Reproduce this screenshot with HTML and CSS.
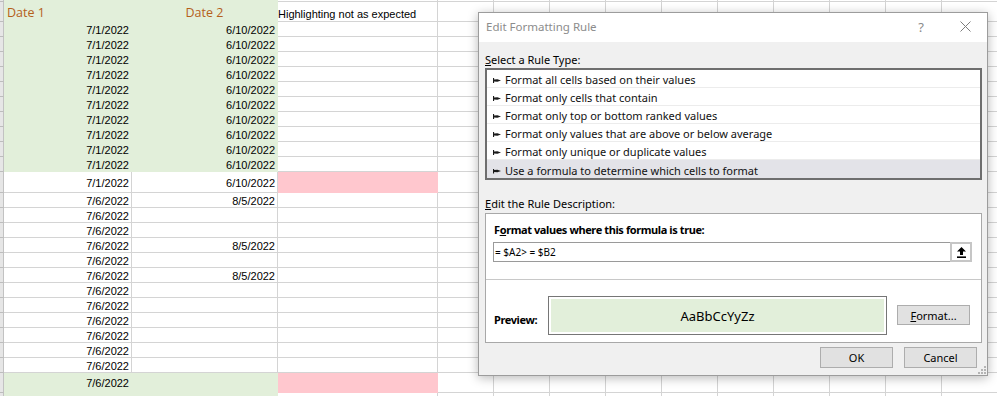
FILE: index.html
```html
<!DOCTYPE html>
<html lang="en">
<head>
    <meta charset="UTF-8">
    <title>Edit Formatting Rule</title>
    <link rel="stylesheet" href="styles.css">
</head>
<body>
    <div class="sheet">
        <div class="row top"><div class="rh"></div><div class="g"></div><div class="g"></div><div></div><div class="rest"></div></div>
        <div class="row head"><div class="rh"></div><div class="g hd left">Date 1</div><div class="g hd mid">Date 2</div><div class="note">Highlighting not as expected</div><div class="rest"></div></div>
        <div class="row"><div class="rh"></div><div class="g">7/1/2022</div><div class="g">6/10/2022</div><div></div><div class="rest"></div></div>
        <div class="row"><div class="rh"></div><div class="g">7/1/2022</div><div class="g">6/10/2022</div><div></div><div class="rest"></div></div>
        <div class="row"><div class="rh"></div><div class="g">7/1/2022</div><div class="g">6/10/2022</div><div></div><div class="rest"></div></div>
        <div class="row"><div class="rh"></div><div class="g">7/1/2022</div><div class="g">6/10/2022</div><div></div><div class="rest"></div></div>
        <div class="row"><div class="rh"></div><div class="g">7/1/2022</div><div class="g">6/10/2022</div><div></div><div class="rest"></div></div>
        <div class="row"><div class="rh"></div><div class="g">7/1/2022</div><div class="g">6/10/2022</div><div></div><div class="rest"></div></div>
        <div class="row"><div class="rh"></div><div class="g">7/1/2022</div><div class="g">6/10/2022</div><div></div><div class="rest"></div></div>
        <div class="row"><div class="rh"></div><div class="g">7/1/2022</div><div class="g">6/10/2022</div><div></div><div class="rest"></div></div>
        <div class="row"><div class="rh"></div><div class="g">7/1/2022</div><div class="g">6/10/2022</div><div></div><div class="rest"></div></div>
        <div class="row"><div class="rh"></div><div class="g">7/1/2022</div><div class="g">6/10/2022</div><div></div><div class="rest"></div></div>
        <div class="row tall"><div class="rh"></div><div>7/1/2022</div><div>6/10/2022</div><div class="p"></div><div class="rest"></div></div>
        <div class="row"><div class="rh"></div><div>7/6/2022</div><div>8/5/2022</div><div></div><div class="rest"></div></div>
        <div class="row"><div class="rh"></div><div>7/6/2022</div><div></div><div></div><div class="rest"></div></div>
        <div class="row"><div class="rh"></div><div>7/6/2022</div><div></div><div></div><div class="rest"></div></div>
        <div class="row"><div class="rh"></div><div>7/6/2022</div><div>8/5/2022</div><div></div><div class="rest"></div></div>
        <div class="row"><div class="rh"></div><div>7/6/2022</div><div></div><div></div><div class="rest"></div></div>
        <div class="row"><div class="rh"></div><div>7/6/2022</div><div>8/5/2022</div><div></div><div class="rest"></div></div>
        <div class="row"><div class="rh"></div><div>7/6/2022</div><div></div><div></div><div class="rest"></div></div>
        <div class="row"><div class="rh"></div><div>7/6/2022</div><div></div><div></div><div class="rest"></div></div>
        <div class="row"><div class="rh"></div><div>7/6/2022</div><div></div><div></div><div class="rest"></div></div>
        <div class="row"><div class="rh"></div><div>7/6/2022</div><div></div><div></div><div class="rest"></div></div>
        <div class="row"><div class="rh"></div><div>7/6/2022</div><div></div><div></div><div class="rest"></div></div>
        <div class="row"><div class="rh"></div><div>7/6/2022</div><div></div><div></div><div class="rest"></div></div>
        <div class="row last"><div class="rh"></div><div class="g">7/6/2022</div><div class="g"></div><div class="p"></div><div class="rest"></div></div>
        <div class="row"><div class="rh"></div><div class="g"></div><div class="g"></div><div></div><div class="rest"></div></div>
    </div>

    <div class="dialog">
        <div class="titlebar">
            <span class="title">Edit Formatting Rule</span>
            <span class="tb-btn help">?</span>
            <span class="tb-btn close">
                <svg width="11" height="11" viewBox="0 0 11 11"><path d="M0.5 0.5L10.5 10.5M10.5 0.5L0.5 10.5" stroke="#7d7d7d" stroke-width="1" fill="none"/></svg>
            </span>
        </div>
        <div class="dlg-body">
            <div class="label"><u>S</u>elect a Rule Type:</div>
            <ul class="rule-list">
                <li>Format all cells based on their values</li>
                <li>Format only cells that contain</li>
                <li>Format only top or bottom ranked values</li>
                <li>Format only values that are above or below average</li>
                <li>Format only unique or duplicate values</li>
                <li class="selected">Use a formula to determine which cells to format</li>
            </ul>
            <div class="label desc-label"><u>E</u>dit the Rule Description:</div>
            <div class="desc">
                <div class="desc-top">
                    <div class="bold">F<u>o</u>rmat values where this formula is true:</div>
                    <div class="formula">
                        <span class="formula-text">= $A2&gt; = $B2</span>
                        <span class="ref-btn">
                            <svg width="9" height="11" viewBox="0 0 9 11"><path d="M4.5 0L9 4.5H6V8H3V4.5H0Z" fill="#000"/><rect x="0" y="9.4" width="9" height="1.6" fill="#000"/></svg>
                        </span>
                    </div>
                </div>
                <div class="desc-preview">
                    <span class="bold preview-label">Preview:</span>
                    <div class="preview-box"><div class="preview-fill">AaBbCcYyZz</div></div>
                    <button class="btn format-btn"><u>F</u>ormat...</button>
                </div>
            </div>
            <div class="footer">
                <button class="btn">OK</button>
                <button class="btn">Cancel</button>
            </div>
        </div>
        <svg class="grip" width="9" height="9" viewBox="0 0 9 9">
            <rect x="7" y="1" width="2" height="2" fill="#b4b4b4"/>
            <rect x="4" y="4" width="2" height="2" fill="#b4b4b4"/>
            <rect x="7" y="4" width="2" height="2" fill="#b4b4b4"/>
            <rect x="1" y="7" width="2" height="2" fill="#b4b4b4"/>
            <rect x="4" y="7" width="2" height="2" fill="#b4b4b4"/>
            <rect x="7" y="7" width="2" height="2" fill="#b4b4b4"/>
        </svg>
    </div>
</body>
</html>
```

FILE: styles.css
```css
* {
    box-sizing: border-box;
}

body {
    margin: 0;
    width: 997px;
    height: 396px;
    overflow: hidden;
    position: relative;
    background: #fff;
    font-family: "Liberation Sans", Arial, sans-serif;
    font-size: 11px;
    color: #000;
}

/* Spreadsheet grid */
.sheet {
    display: flex;
    flex-direction: column;
}

.row {
    display: grid;
    grid-template-columns: 4px 128px 146px 160px 559px;
    height: 15px;
}

.row.top { height: 2px; }
.row.head { height: 20px; }
.row.tall { height: 21px; }
.row.last { height: 20px; }

.row > div {
    display: flex;
    align-items: center;
    justify-content: flex-end;
    padding: 2px 2px 0 0;
    line-height: 11px;
    white-space: nowrap;
    border-right: 1px solid #d4d4d4;
    border-bottom: 1px solid #d4d4d4;
}

.row.top > div {
    padding: 0;
}

.row .rh {
    padding: 0;
    background: #e6e6e6;
    border-right-color: #c2c2c2;
    border-bottom-color: #bdbdbd;
}

.row .rest {
    border-right: 0;
    background: repeating-linear-gradient(to right, transparent 0 55px, #d4d4d4 55px 56px);
}

.row .g {
    background: #e2efda;
    border-color: #e2efda;
}

.row .p {
    background: #ffc7ce;
    border-color: #ffc7ce;
}

.row.head > div {
    align-items: flex-end;
    padding: 0 0 1px 0;
}

.row .hd {
    font-family: "Open Sans", sans-serif;
    font-size: 12.5px;
    line-height: 14px;
    color: #b5601a;
}

.row .hd.left {
    justify-content: flex-start;
    padding-left: 3px;
}

.row .hd.mid {
    justify-content: center;
}

.row .note {
    justify-content: flex-start;
    padding: 0 0 2px 2px;
}

/* Dialog */
.dialog {
    position: absolute;
    left: 478px;
    top: 12px;
    width: 510px;
    height: 364px;
    background: #f0f0f0;
    border: 1px solid #9c9c9c;
    box-shadow: 0 2px 10px rgba(0,0,0,0.28);
    font-family: "Noto Sans", sans-serif;
    font-size: 11px;
    display: flex;
    flex-direction: column;
}

.titlebar {
    height: 29px;
    background: #fff;
    display: flex;
    align-items: center;
    padding: 0 0 2px 7px;
}

.title {
    flex: 1;
    font-size: 11.5px;
    line-height: 16px;
    color: #8c8c8c;
}

.tb-btn {
    width: 44px;
    display: flex;
    justify-content: center;
    align-items: center;
    color: #8a8a8a;
}

.help {
    font-size: 13px;
    line-height: 16px;
}

.dlg-body {
    flex: 1;
    padding: 10px 5px 0 6px;
    display: flex;
    flex-direction: column;
}

.label {
    line-height: 15px;
}

.rule-list {
    list-style: none;
    margin: 1px 0 0 0;
    padding: 0;
    background: #fff;
    border: 2px solid #6e6e6e;
}

.rule-list li {
    height: 18px;
    line-height: 17px;
    padding: 2px 0 0 6px;
    display: flex;
    align-items: center;
    border-bottom: 1px solid #ececec;
    color: #111;
}

.rule-list li::before {
    content: "";
    width: 8px;
    height: 5px;
    margin: 2px 4px 0 0;
    background: #1a1a1a;
    clip-path: polygon(0 0, 14% 0, 14% 30%, 55% 25%, 100% 50%, 55% 75%, 14% 70%, 14% 100%, 0 100%);
}

.rule-list li.selected {
    background: #e3e3e8;
    border-bottom: 0;
}

.desc-label {
    margin: 16px 0 2px 0;
}

.desc {
    height: 130px;
    background: #fff;
    border: 1px solid #a8a8a8;
    display: flex;
    flex-direction: column;
}

.desc-top {
    height: 66px;
    padding: 8px 9px 0 7px;
    border-bottom: 1px solid #c8c8c8;
}

.bold {
    font-weight: bold;
    letter-spacing: -0.4px;
    line-height: 15px;
    padding-left: 1px;
}

.formula {
    margin-top: 5px;
    height: 20px;
    border: 1px solid #9a9a9a;
    display: flex;
    align-items: center;
}

.formula-text {
    font-size: 10px;
    padding-left: 1px;
    flex: 1;
}

.ref-btn {
    width: 22px;
    height: 20px;
    margin: -1px -1px -1px 0;
    border: 2px solid #c6c6c6;
    background: #fff;
    display: flex;
    justify-content: center;
    align-items: center;
}

.desc-preview {
    flex: 1;
    display: flex;
    padding: 16px 10px 7px 7px;
    align-items: flex-start;
}

.preview-label {
    width: 55px;
    align-self: center;
    margin-top: 8px;
}

.preview-box {
    width: 339px;
    height: 39px;
    border: 1px solid #767676;
    padding: 2px;
    background: #fff;
}

.preview-fill {
    height: 100%;
    background: #e2efda;
    display: flex;
    justify-content: center;
    align-items: center;
    font-size: 13px;
}

.btn {
    width: 73px;
    height: 21px;
    padding: 0;
    background: #e1e1e1;
    border: 1px solid #adadad;
    font-family: "Noto Sans", sans-serif;
    font-size: 11px;
    color: #000;
}

.format-btn {
    height: 20px;
    margin: 9px 0 0 10px;
}

.footer {
    display: flex;
    justify-content: flex-end;
    gap: 11px;
    padding: 4px 5px 0 0;
}

.grip {
    position: absolute;
    right: 1px;
    bottom: 1px;
}
```
